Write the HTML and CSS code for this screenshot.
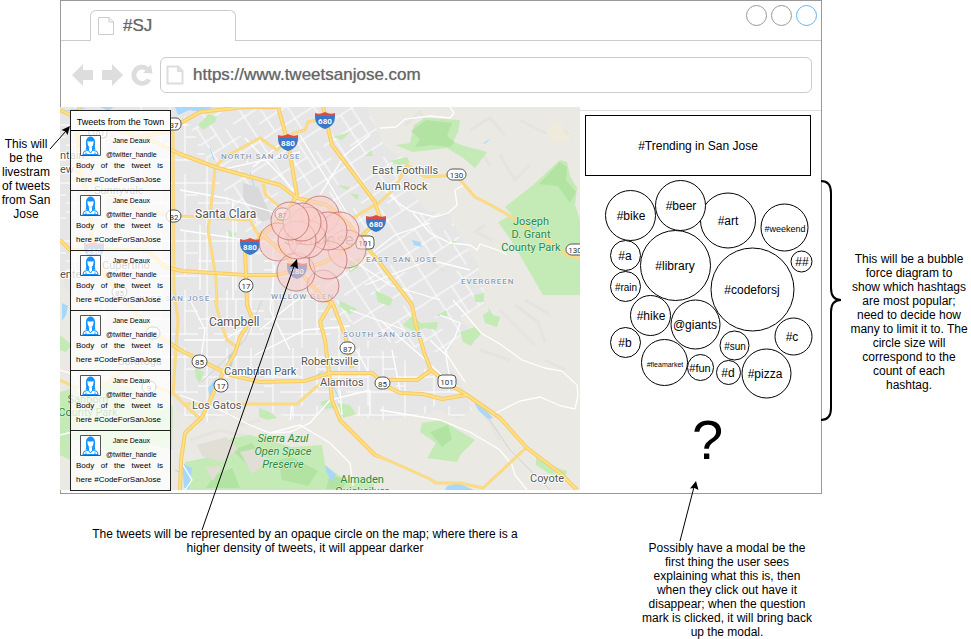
FILE: index.html
```html
<!DOCTYPE html>
<html lang="en">
<head>
<meta charset="utf-8">
<title>#SJ</title>
<link rel="stylesheet" href="styles.css">
</head>
<body>
<div class="page">
  <p class="note note-left">This will be the livestram of tweets from San Jose</p>

  <main class="browser">
    <header class="tabs">
      <button class="tab" type="button">
        <svg class="file" viewBox="0 0 18 20" width="18" height="20"><path d="M1.500 1.500H12L16.500 6V18.500H1.500Z M12 1.500V6H16.500"/></svg>
        <span>#SJ</span>
      </button>
      <div class="window-buttons">
        <button type="button" aria-label="Minimize"></button>
        <button type="button" aria-label="Maximize"></button>
        <button type="button" class="close" aria-label="Close"></button>
      </div>
    </header>
    <div class="toolbar">
      <button type="button" class="nav" aria-label="Back"><svg viewBox="0 0 24 26" width="24" height="26"><path d="M2 13 13 2V8H23V18H13V24Z"/></svg></button>
      <button type="button" class="nav" aria-label="Forward"><svg viewBox="0 0 24 26" width="24" height="26"><path d="M23 13 12 2V8H2V18H12V24Z"/></svg></button>
      <button type="button" class="nav" aria-label="Reload"><svg viewBox="0 0 24 26" width="24" height="26"><path d="M18.500 5 21 2.500 22.500 11.500 13 11 15.500 8.500A5.800 5.800 0 1 0 17 16.500L21 18.500A10.500 10.500 0 1 1 18.500 5Z"/></svg></button>
      <label class="address">
        <svg class="file wide" viewBox="0 0 18 20" width="18" height="20"><path d="M1.500 1.500H12L16.500 6V18.500H1.500Z M12 1.500V6H16.500"/></svg>
        <input type="text" value="https://www.tweetsanjose.com" aria-label="Address">
      </label>
    </div>

    <div class="content">
      <section class="map">
        <svg class="map-art" viewBox="60 107 520 383" role="img" aria-label="Map of San Jose">
          <defs>
            <pattern id="grid" width="66" height="58" patternUnits="userSpaceOnUse">
              <path class="street" d="M0 9H66M0 29H38M16 44H66M9 0V58M29 0V29M38 9V58M53 0V44M0 38H9M53 21H66"/>
            </pattern>
            <pattern id="diagonal" width="64" height="68" patternUnits="userSpaceOnUse" patternTransform="rotate(-33)">
              <path class="street" d="M0 10H64M0 27H44M22 41H64M0 56H64M13 0V68M31 10V56M44 0V41M55 27V68"/>
            </pattern>
            <clipPath id="urban">
              <path d="M60 107H366L385 146 406 160 412 195 430 212 448 213 464 242 478 265 484 292V305L460 318 472 332 454 340 445 360 462 385 472 410 458 420 440 410 400 418 380 421 330 410 300 421 250 405 200 425 176 410 162 368 125 358 104 320 72 300 60 275Z"/>
            </clipPath>
            <g id="minor-roads">
              <path d="M217 305 216 278 208 230 213 190 215 168 223 158 260 138 277 150 288 140M291 134 305 130 308 122 321 119M263 184 266 195 283 210M70 167 110 195 145 212 180 216 250 220 258 235 285 250M215 300 220 320 227 340 237 347M173 125 174 290 178 320 173 393 190 410 202 420"/>
              <path d="M185 404H297L315 388 330 378M60 380 75 387 107 383 127 368 157 387 175 395M353 218 380 202 395 188 407 165 425 177 455 175 462 182 475 197 487 203 505 213 520 223 535 233 550 242 567 255 580 258M380 457 390 461 430 479 436 483 460 483 483 488 527 447"/>
            </g>
            <g id="highways">
              <path d="M60 110 77 118 150 140 180 154 218 168 280 185 297 198 327 205 350 225 365 245 380 263 412 305 416 325 425 355 431 370 443 380 467 395 500 418 527 448 560 473 577 490"/>
              <path d="M278 107 288 143 297 195 285 215 260 238 245 253 246 275 247 305 252 318 240 337 235 353 223 373 202 417 185 433 181 460 180 490"/>
              <path d="M323 107 332 145 360 182 375 202 380 218 360 238 345 250 325 262 300 270 275 275 245 275 182 271 165 267 147 250H70L60 240"/>
              <path d="M80 107 76 125 80 165 90 208 92 245 105 275 125 300 150 330 180 350 200 360 230 375 260 382 305 381 330 373H372L388 387 400 393 423 394 442 399 467 395M388 380H417L430 371"/>
              <path d="M260 232 285 255 300 272 325 300 332 302 345 335 352 368M332 302 320 322 325 340 329 373 332 400 340 420 375 455 380 457M140 137 165 132 200 112 245 107H280"/>
            </g>
          </defs>
          <path fill="#ebe9e4" d="M60 107H580V490H60Z"/>
          <g clip-path="url(#urban)">
            <path fill="#e6e6e6" d="M60 107H580V490H60Z"/>
            <path fill="url(#grid)" d="M60 107H180L250 240 320 262 330 310 380 350 500 400V490H60Z"/>
            <path fill="url(#diagonal)" d="M180 107H520V370L380 340 330 310 320 262 250 240Z"/>
            <path fill="#d9d9db" d="M243 183 258 187 272 218 262 222 243 198Z"/>
          </g>

          <g class="relief">
            <path d="M405 125 420 112 430 130 445 118M470 130 490 118 505 135M455 153 480 150 490 166M520 120 545 133 557 125 572 137M500 155 515 180 530 165M430 260 445 272M485 225 475 232 492 240M500 310 520 330 535 345M515 305 538 322 545 342M525 300 550 315M480 350 510 360M545 360 565 370M440 420 460 440M480 405 500 440M70 330 100 350 85 365M65 400 90 420M100 435 130 460M190 440 220 430 270 442M75 450 95 475M135 400 155 425M240 425 260 420"/>
          </g>
          <path class="hills" d="M546 130 560 120 566 135 575 133 565 143 550 142ZM548 190 560 188 552 198Z"/>

          <g class="park">
            <path d="M425 118 460 120 458 132 453 142 468 147 487 152 475 168 462 157 447 148 413 152 395 145 410 143 414 125Z"/>
            <path d="M505 207 533 185 560 160 567 162 570 176 577 188 575 205 580 220V295H543L511 240 498 222 512 215Z"/>
            <path d="M390 161 407 157 410 163 398 165ZM198 125 209 114 217 117 215 122 203 130ZM452 240 458 243 452 245ZM474 295 484 293 484 302H475Z"/>
            <path d="M483 315 489 311 488 307 493 315 500 317 497 327 485 323ZM460 332 475 327 482 333 475 340 471 346 463 342ZM403 325 412 316 421 323 438 322 436 330 425 328 413 331ZM435 316 446 310 448 316ZM340 301 357 309 350 314 339 306ZM375 290 393 299 390 306 378 302Z"/>
            <path d="M422 423 441 420 475 440 461 454 457 462 427 458 436 443 420 432ZM536 458 560 469 567 471 565 478 548 473 536 465Z"/>
            <path d="M259 408 270 412 277 418 268 420 259 417ZM320 402 333 398 334 408 325 409ZM337 403 350 405 356 414 343 418ZM195 368 204 372 200 384 196 378Z"/>
            <path d="M185 462 205 458 232 438 250 435 292 447 322 445 325 465 345 480 374 484V490H185ZM60 335 72 345 66 352 60 350ZM60 392 95 382 128 386 160 410 173 405 172 450 150 445 138 460 120 451 105 465 90 440 72 440 70 460 60 455Z"/>
            <path d="M244 157 247 159 246 161 243 160ZM365 156 371 150 373 156ZM350 193 359 195 357 200ZM337 185 350 187 347 190ZM349 261 360 258 358 268 349 273ZM228 230 236 234 230 239ZM333 137 350 132 342 140Z"/>
          </g>
          <g class="forest">
            <path d="M426 120 452 123 447 136 455 142 450 147 432 145 415 147 420 139 411 131ZM539 184 560 162 567 167 566 180 576 192 570 203 558 186Z"/>
            <path d="M232 450 252 443 260 454 248 465ZM278 460 292 457 318 471 308 486 282 480ZM215 475 232 468 240 488H206ZM330 475 348 480 342 489H326ZM430 432 448 425 452 439 442 447Z"/>
          </g>
          <path class="earth" d="M197 445 226 437 238 449 222 462 202 456ZM240 452 258 448 270 461 252 474ZM205 467 222 466 213 481Z"/>

          <g class="water">
            <path d="M175 107H213L202 112 189 110 178 115ZM412 240 420 242 422 247 414 245ZM482 144 491 138 486 143ZM530 224 537 228 532 232ZM474 403 484 408 493 418 488 419 479 411ZM325 465 336 475 332 482 326 471ZM182 463 192 468 189 489 184 488ZM208 388 217 377 210 397ZM229 355 234 352 232 366 226 370ZM447 486 458 483 474 490H445ZM62 303 68 306 66 315 62 321ZM100 107H114L108 111Z"/>
            <path class="stream" d="M60 112 85 108M210 148 214 160M250 172 254 186M333 386 340 400M316 376 323 371M185 475 175 470"/>
          </g>

          <g class="lane">
            <path d="M380 128 396 127 405 119 430 116 450 118 454 113 450 107M380 185 397 202 410 211 435 217 448 213 457 205 455 190 466 184M413 213 430 233 450 243 470 245 477 250 480 244 500 251 507 255"/>
            <path d="M453 300 466 315 481 333 500 344 522 360 545 368 562 371 577 385 578 395 575 409 561 406 540 397 520 401 500 411 492 415"/>
            <path d="M380 410 440 420 470 432 500 450 512 465 515 475 527 490M430 340 446 355 450 380 467 395M440 315 460 323 455 337 445 352 465 382"/>
            <path d="M180 395 220 410 250 425 270 433 290 432 310 423 330 400 370 390M292 404 290 420M60 370 75 375 80 395 92 405M60 435 80 430 115 460 126 490M270 433 300 425 330 443 350 463 353 486M180 460 192 480 185 490"/>
            <path d="M260 330 290 305 320 285M255 355 305 330 350 326M190 300 205 330 200 365M184 340 223 340 258 320M275 265 270 310 290 350M340 320 370 375M380 320 420 355 460 392M350 310 405 330M392 350 400 390M370 390V415M340 390 342 415"/>
            <path d="M180 230 220 236 258 242 300 237M233 200V300M200 225V290M180 190 225 198 280 214M245 138 302 199M220 170 300 152M253 167 285 140M300 135 360 235M320 195 345 155 370 135M330 245 390 285 440 300M350 270 395 235 430 223M365 285 430 260 470 270"/>
          </g>
          <path class="rail" d="M480 405 510 450 550 490M202 382 245 340 262 300"/>

          <use href="#minor-roads" class="minor edge"/>
          <use href="#minor-roads" class="minor"/>
          <use href="#highways" class="major edge"/>
          <use href="#highways" class="major"/>

          <g class="place">
            <text x="195" y="218" class="city">Santa Clara</text>
            <text x="209" y="326">Campbell</text>
            <text x="301" y="365">Robertsville</text>
            <text x="224" y="375">Cambrian Park</text>
            <text x="320" y="386">Alamitos</text>
            <text x="192" y="409">Los Gatos</text>
            <text x="372" y="174">East Foothills</text>
            <text x="375" y="190">Alum Rock</text>
            <text x="530" y="482">Coyote</text>
            <text x="94" y="194">Sunnyvale</text>
            <text x="102" y="269">Cupertino</text>
            <text x="118" y="365">Saratoga</text>
            <text x="60" y="159">ntain</text>
            <text x="60" y="173">ew</text>
            <text x="60" y="278">ente</text>
            <text x="284" y="245" class="metro">San Jose</text>
          </g>
          <g class="district">
            <text x="221" y="159">NORTH SAN JOSE</text>
            <text x="366" y="262">EAST SAN JOSE</text>
            <text x="461" y="284">EVERGREEN</text>
            <text x="343" y="337">SOUTH SAN JOSE</text>
            <text x="271" y="299">WILLOW GLEN</text>
            <text x="137" y="301">WEST SAN JOSE</text>
          </g>
          <g class="park-name">
            <text x="531" y="225">Joseph</text><text x="531" y="238">D. Grant</text><text x="531" y="251">County Park</text>
            <text x="283" y="442" class="slanted">Sierra Azul</text><text x="283" y="455" class="slanted">Open Space</text><text x="283" y="468" class="slanted">Preserve</text>
            <text x="362" y="483">Almaden</text><text x="362" y="495">Quicksilver</text>
            <text x="88" y="403">Sanborn</text><text x="88" y="416">County Park</text>
          </g>

          <g class="shield">
            <rect x="447" y="169" width="19" height="11" rx="5.500"/><text x="456.500" y="178">130</text>
            <rect x="566" y="244" width="19" height="11" rx="5.500"/><text x="575" y="253">130</text>
            <rect x="239" y="279" width="14" height="13" rx="6.500"/><text x="246" y="289">17</text>
            <rect x="214" y="379" width="14" height="13" rx="6.500"/><text x="221" y="389">17</text>
            <rect x="192" y="355" width="15" height="13" rx="6.500"/><text x="199.500" y="365">85</text>
            <rect x="340" y="342" width="15" height="12" rx="6"/><text x="347.500" y="352">87</text>
            <rect x="375" y="377" width="15" height="12" rx="6"/><text x="382.500" y="387">85</text>
            <rect x="275" y="208" width="15" height="12" rx="6"/><text x="282.500" y="218">87</text>
            <rect x="438" y="375" width="18" height="13" rx="4"/><text x="447" y="385">101</text>
            <rect x="356" y="236" width="18" height="13" rx="4"/><text x="365" y="246">101</text>
            <rect x="165" y="118" width="16" height="12" rx="5"/><text x="174" y="128">37</text>
            <rect x="166" y="210" width="15" height="12" rx="6"/><text x="174" y="220">82</text>
            <rect x="89" y="127" width="18" height="11" rx="4"/><text x="98" y="136">101</text>
            <rect x="112" y="286" width="15" height="12" rx="6"/><text x="119.500" y="296">85</text>
            <rect x="146" y="327" width="14" height="12" rx="6"/><text x="153" y="337">85</text>
            <rect x="142" y="381" width="14" height="12" rx="6"/><text x="149" y="391">9</text>
          </g>
          <g class="interstate">
            <g id="interstate-mark"><path fill="#3b78c9" d="M315 116C315 124 319 127 325 129 331 127 335 124 335 116Z"/><path fill="#de4b41" d="M315 113Q320 115 325 112 330 115 335 113V116H315Z"/></g>
            <use href="#interstate-mark" x="-37" y="22"/>
            <use href="#interstate-mark" x="-75" y="126"/>
            <use href="#interstate-mark" x="51" y="103"/>
            <use href="#interstate-mark" x="-231" y="130"/>
            <use href="#interstate-mark" x="-28" y="150"/>
            <text x="325" y="124">680</text><text x="288" y="146">880</text><text x="250" y="250">880</text><text x="376" y="227">680</text><text x="94" y="254">280</text><text x="297" y="274">280</text>
          </g>

          <g class="tweet-spots">
            <circle cx="347" cy="249" r="19"/><circle cx="320" cy="215" r="19"/><circle cx="340" cy="231" r="19"/>
            <circle cx="278" cy="242" r="19"/><circle cx="323" cy="286" r="16"/><circle cx="296" cy="272" r="19"/>
            <circle cx="328" cy="260" r="19"/><circle cx="328" cy="231" r="19"/><circle cx="307" cy="239" r="19"/>
            <circle cx="308" cy="226" r="19"/><circle cx="297" cy="240" r="19"/><circle cx="302" cy="222" r="19"/>
            <circle cx="290" cy="221" r="19"/>
          </g>
        </svg>

        <svg class="sprite" aria-hidden="true"><defs>
          <symbol id="avatar" viewBox="0 0 21 21">
            <path fill="#fff" stroke="#555" d="M.5.500H20.500V20.500H.5Z"/>
            <path class="hair" d="M5.500 14.500C7 12 5.500 9 6 6 6.500 3 8.500 1.500 10.500 1.500S14.500 3 15 6C15.500 9 14 12 15.500 14.500L12.500 15V12.500H8.500V15Z"/>
            <path class="face" d="M7.500 6Q11 7 13.500 6C13.800 9.500 12.500 12 10.500 12.500 8.500 12 7.200 9.500 7.500 6Z"/>
            <path class="bust" d="M8.500 12.500V15L4 16.500 2.800 19.500H18.200L17 16.500 12.500 15V12.500"/>
            <path class="bust" d="M8 15 10.500 18 13 15M6 17.500V19.500M15 17.500V19.500"/>
          </symbol>
        </defs></svg>
        <div class="stream-panel">
          <h2>Tweets from the Town</h2>
          <article class="tweet"><div class="who"><svg class="avatar"><use href="#avatar"/></svg><div><b>Jane Deaux</b><i>@twitter_handle</i></div></div><p>Body of the tweet is here #CodeForSanJose</p></article>
          <article class="tweet"><div class="who"><svg class="avatar"><use href="#avatar"/></svg><div><b>Jane Deaux</b><i>@twitter_handle</i></div></div><p>Body of the tweet is here #CodeForSanJose</p></article>
          <article class="tweet"><div class="who"><svg class="avatar"><use href="#avatar"/></svg><div><b>Jane Deaux</b><i>@twitter_handle</i></div></div><p>Body of the tweet is here #CodeForSanJose</p></article>
          <article class="tweet"><div class="who"><svg class="avatar"><use href="#avatar"/></svg><div><b>Jane Deaux</b><i>@twitter_handle</i></div></div><p>Body of the tweet is here #CodeForSanJose</p></article>
          <article class="tweet"><div class="who"><svg class="avatar"><use href="#avatar"/></svg><div><b>Jane Deaux</b><i>@twitter_handle</i></div></div><p>Body of the tweet is here #CodeForSanJose</p></article>
          <article class="tweet"><div class="who"><svg class="avatar"><use href="#avatar"/></svg><div><b>Jane Deaux</b><i>@twitter_handle</i></div></div><p>Body of the tweet is here #CodeForSanJose</p></article>
        </div>
      </section>

      <aside class="trends">
        <h1>#Trending in San Jose</h1>
        <svg class="bubbles" viewBox="580 176 241 226" role="img" aria-label="Trending hashtags">
          <circle cx="728" cy="220.500" r="27.500"/><circle cx="630.500" cy="215.500" r="25"/><circle cx="680.500" cy="205.500" r="25"/>
          <circle cx="784.500" cy="227.500" r="23.500"/><circle cx="801.500" cy="261.500" r="10.500"/><circle cx="625.500" cy="255.500" r="15"/>
          <circle cx="625.500" cy="286.500" r="15"/><circle cx="650.500" cy="315.500" r="20"/><circle cx="675.500" cy="265.500" r="35"/>
          <circle cx="695.500" cy="324.500" r="24.500"/><circle cx="752.500" cy="289.500" r="41.500"/><circle cx="625.500" cy="342.500" r="15"/>
          <circle cx="664.500" cy="362.500" r="23"/><circle cx="734.500" cy="345.500" r="14.500"/><circle cx="793.500" cy="336.500" r="18.500"/>
          <circle cx="700.500" cy="367.500" r="13"/><circle cx="728.500" cy="372.500" r="12"/><circle cx="766.500" cy="373.500" r="24.500"/>
          <text x="631" y="220">#bike</text><text x="681" y="210">#beer</text><text x="728" y="225">#art</text>
          <text x="785" y="232" class="size-9">#weekend</text><text x="802" y="266">##</text><text x="625" y="260">#a</text>
          <text x="626" y="291" class="size-10">#rain</text><text x="651" y="320">#hike</text><text x="675" y="270">#library</text>
          <text x="695" y="329">@giants</text><text x="752" y="294">#codeforsj</text><text x="625" y="347">#b</text>
          <text x="665" y="367" class="size-7">#fleamarket</text><text x="735" y="350" class="size-10">#sun</text><text x="792" y="341">#c</text>
          <text x="700" y="372" class="size-11">#fun</text><text x="728" y="377">#d</text><text x="765" y="378">#pizza</text>
        </svg>
        <button class="help" type="button">?</button>
      </aside>
    </div>
  </main>

  <p class="note note-right">This will be a bubble force diagram to show which hashtags are most popular; need to decide how many to limit it to. The circle size will correspond to the count of each hashtag.</p>

  <footer class="below">
    <p class="note note-map">The tweets will be represented by an opaque circle on the map; where there is a higher density of tweets, it will appear darker</p>
    <p class="note note-modal">Possibly have a modal be the first thing the user sees explaining what this is, then when they click out have it disappear; when the question mark is clicked, it will bring back up the modal.</p>
  </footer>

  <svg class="pointers" viewBox="0 0 971 639" aria-hidden="true">
    <path class="line" d="M50 149 66 131M202 530 294 266M680 541 694 487"/>
    <path d="M70 126 67.500 135 65.500 131.500 61.500 130ZM297 259 298 269 294 266.500 290 266.500ZM696 481 698.500 490 694.500 488 690 488.500Z"/>
    <path class="brace" d="M821 181Q831 181 831 193V288Q831 300 841 300 831 300 831 312V408Q831 420 821 420"/>
  </svg>
</div>
</body>
</html>
```

FILE: styles.css
```css
* { box-sizing: border-box; }
body { margin: 0; background: #fff; color: #000; font-family: "Liberation Sans", Arial, sans-serif; }
button { font: inherit; color: inherit; background: none; border: 0; padding: 0; }
p, h1, h2 { margin: 0; font-weight: 400; }
svg { display: block; }

.page { position: relative; display: grid; grid-template-columns: 60px minmax(0, 1fr) 149px; }
.note { font-size: 12px; line-height: 14px; text-align: center; }
.note-left { padding: 137px 8px 0 0; }
.note-right { padding: 252px 3px 0 28px; }
.pointers { position: absolute; top: 0; left: 0; width: 100%; height: auto; pointer-events: none; }
.pointers .line { fill: none; stroke: #000; stroke-width: 1; }
.pointers .brace { fill: none; stroke: #000; stroke-width: 2; }

.browser { border: 1px solid #999; padding-bottom: 3px; }
.tabs { display: flex; justify-content: space-between; height: 40px; padding: 9px 4px 0 29px; border-bottom: 1px solid #ccc; }
.tab { display: flex; align-items: center; gap: 8px; width: 146px; height: 31px; padding: 0 6px; background: #fff; border: 1px solid #ccc; border-bottom: 0; border-radius: 6px 6px 0 0; color: #666; font-size: 17px; text-shadow: 0 0 1px #999; }
.file path { fill: #fff; stroke: #ccc; stroke-width: 1; }
.file.wide path { stroke-width: 2; stroke: #ddd; }
.window-buttons { display: flex; gap: 4px; margin-top: -5px; }
.window-buttons button { width: 21px; height: 21px; border: 1px solid #999; border-radius: 50%; }
.window-buttons .close { border-color: #5fb4ff; }
.toolbar { display: flex; align-items: center; gap: 6px; height: 70px; padding: 0 9px 2px 9px; border-bottom: 1px solid #ddd; }
.nav path { fill: #ddd; }
.address { flex: 1; display: flex; align-items: center; gap: 9px; height: 36px; padding: 0 5px; border: 1px solid #ccc; border-radius: 6px; }
.address input { flex: 1; min-width: 0; border: 0; padding: 0; background: none; outline: 0; color: #666; font: 17px "Liberation Sans", Arial, sans-serif; text-shadow: 0 0 1px #999; }

.content { display: grid; grid-template-columns: minmax(0, 520fr) minmax(0, 241fr); margin-left: -1px; }
.map { position: relative; margin-top: -4px; }
.map-art { width: 100%; height: auto; font-family: Roboto, sans-serif; }
.sprite { position: absolute; width: 0; height: 0; }
.street { fill: none; stroke: #fff; stroke-width: 1; }
.lane path { fill: none; stroke: #fff; stroke-width: 1.3; }
.relief path { fill: none; stroke: #dddcd6; stroke-width: 3; opacity: .4; }
.hills { fill: #eeebdc; }
.earth { fill: #e0ded5; }
.park { fill: #c4eab5; }
.forest { fill: #addf9b; opacity: .7; }
.water { fill: #a6d8fb; }
.water .stream { fill: none; stroke: #a6d8fb; }
.rail { fill: none; stroke: #d2d2d2; }
.major, .minor { fill: none; stroke: #ffe083; stroke-width: 2; stroke-linejoin: round; }
.minor { stroke-width: 1; }
.major.edge { stroke: #f7ca67; stroke-width: 4; }
.minor.edge { stroke: #f9d783; stroke-width: 3; }
.place text { fill: #555; font-size: 11px; stroke: #fff; stroke-width: 2; paint-order: stroke; }
.place .city, .place text:nth-child(2) { font-size: 12px; }
.place .metro { font-size: 17px; }
.district text { fill: #8799b5; font-size: 8px; font-weight: 500; letter-spacing: 1px; stroke: #fff; stroke-width: 1; paint-order: stroke; }
.park-name text { fill: #248a3c; font-size: 11px; text-anchor: middle; stroke: #e5f5df; stroke-width: 1; paint-order: stroke; }
.park-name .slanted { font-style: italic; }
.shield rect { fill: #fff; stroke: #555; }
.shield text { fill: #333; font-size: 8px; text-anchor: middle; }
.interstate text { fill: #fff; font-size: 8px; font-weight: 700; text-anchor: middle; }
.tweet-spots circle { fill: #f8cecc; fill-opacity: .6; stroke: #b85450; stroke-opacity: .65; }

.stream-panel { position: absolute; top: 3px; left: 10px; width: 101px; border: 1px solid #222; border-bottom: 0; }
.stream-panel h2 { height: 20px; border-bottom: 1px solid #000; background: #fff; font-size: 9px; line-height: 22px; text-align: center; }
.tweet { height: 60px; padding: 3px 7px 0 5px; border-bottom: 1px solid #222; background: rgba(255, 255, 255, .76); }
.who { display: flex; gap: 5px; height: 25px; padding-left: 4px; font-size: 7px; line-height: 14px; text-align: center; }
.who b, .who i { display: block; font-weight: 400; font-style: normal; }
.avatar { width: 21px; height: 21px; margin-top: 1px; }
.hair { fill: #1493ff; }
.face { fill: #fff; }
.bust { fill: #fff; stroke: #1493ff; stroke-width: 1; }
.tweet p { font-size: 8px; line-height: 14px; text-align: justify; }

.trends { padding: 4px 0 0; }
.trends h1 { margin: 0 10px 0 5px; height: 61px; border: 1px solid #000; font-size: 12px; line-height: 60px; text-align: center; }
.bubbles { width: 100%; height: auto; }
.bubbles circle { fill: #fff; stroke: #000; }
.bubbles text { font-size: 12px; text-anchor: middle; }
.bubbles .size-11 { font-size: 11px; }
.bubbles .size-10 { font-size: 10px; }
.bubbles .size-9 { font-size: 9px; }
.bubbles .size-7 { font-size: 7px; }
.help { display: block; margin: 6px auto 0; padding-left: 14px; font-size: 56px; line-height: 64px; }

.below { grid-column: 1 / -1; display: flex; gap: 116px; padding-left: 85px; }
.note-map { width: 440px; margin-top: 33px; }
.note-modal { width: 172px; margin-top: 47px; }
```
